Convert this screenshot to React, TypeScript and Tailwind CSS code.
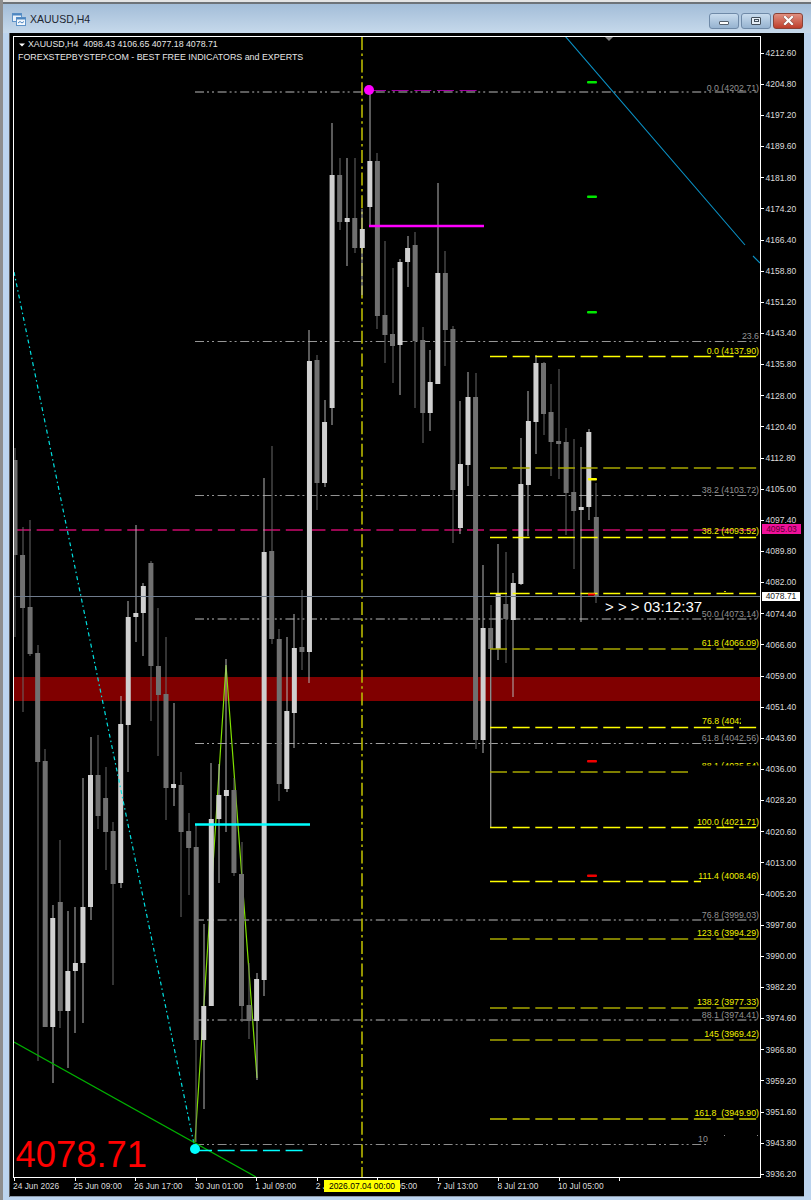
const xOf = (i: number) => 15 + 7.55 * i;

// wick top, body top, body bottom, wick bottom, bull
const candles: [number, number, number, number, boolean][] = [
  [448, 460, 555, 637, false],
  [527, 555, 608, 712, false],
  [520, 607, 654, 656, false],
  [645, 653, 762, 1061, false],
  [749, 761, 1027, 1027, false],
  [905, 918, 1027, 1083, true],
  [840, 902, 1011, 1028, false],
  [911, 971, 1011, 1068, true],
  [907, 963, 971, 1033, true],
  [778, 907, 963, 1023, true],
  [737, 775, 907, 920, true],
  [735, 775, 816, 829, false],
  [767, 798, 832, 870, false],
  [822, 831, 884, 985, false],
  [696, 724, 883, 888, true],
  [601, 617, 725, 772, true],
  [525, 613, 617, 642, true],
  [583, 586, 613, 656, true],
  [561, 563, 666, 721, false],
  [608, 666, 695, 756, false],
  [637, 694, 788, 820, false],
  [703, 784, 788, 806, true],
  [772, 785, 832, 917, false],
  [813, 831, 848, 895, false],
  [825, 847, 1040, 1142, false],
  [924, 1006, 1040, 1109, true],
  [763, 819, 1006, 1006, true],
  [764, 795, 819, 883, true],
  [659, 790, 796, 832, true],
  [778, 790, 873, 876, false],
  [842, 874, 1006, 1022, false],
  [963, 1005, 1021, 1039, false],
  [973, 979, 1021, 1080, true],
  [478, 552, 980, 996, true],
  [446, 551, 639, 644, false],
  [629, 639, 784, 801, false],
  [637, 711, 789, 792, true],
  [614, 648, 713, 748, true],
  [590, 647, 652, 670, false],
  [330, 361, 652, 683, true],
  [355, 360, 483, 510, false],
  [400, 422, 483, 487, true],
  [123, 175, 408, 425, true],
  [158, 175, 222, 230, false],
  [158, 218, 222, 266, true],
  [158, 218, 248, 253, false],
  [209, 229, 248, 295, true],
  [93, 161, 207, 227, true],
  [153, 161, 316, 329, false],
  [241, 315, 335, 363, false],
  [268, 334, 346, 383, false],
  [259, 262, 345, 395, true],
  [236, 248, 262, 287, true],
  [232, 245, 341, 408, false],
  [327, 340, 413, 443, false],
  [350, 382, 413, 431, true],
  [183, 273, 384, 384, true],
  [251, 273, 330, 366, false],
  [326, 329, 490, 543, false],
  [401, 464, 528, 534, true],
  [372, 397, 465, 486, true],
  [373, 397, 740, 749, false],
  [565, 628, 740, 753, true],
  [605, 628, 649, 827, false],
  [544, 594, 649, 660, true],
  [552, 604, 619, 663, false],
  [573, 583, 620, 697, true],
  [438, 484, 584, 585, true],
  [391, 421, 485, 536, true],
  [355, 363, 422, 454, true],
  [362, 363, 414, 435, false],
  [384, 412, 442, 476, false],
  [369, 441, 443, 479, false],
  [428, 442, 493, 535, false],
  [439, 492, 511, 569, false],
  [447, 507, 510, 622, true],
  [429, 432, 507, 520, true],
  [483, 517, 596, 603, false],
];

// half pixel y = thin and bright, whole pixel y = smeared over two rows as in the shot
const grayFib: [number, string, number][] = [
  [92, "#7c7c7c", 1.6],
  [341.5, "#969696", 1],
  [495.5, "#929292", 1],
  [619, "#7c7c7c", 1.6],
  [743.5, "#a0a0a0", 1],
  [920, "#7c7c7c", 1.6],
  [1020, "#7c7c7c", 1.6],
  [1144.5, "#8c8c8c", 1],
];

const yellowFib: [number, number, string, number][] = [
  [356.5, 757, "#ffff00", 1.4],
  [468, 757, "#a8a800", 1.6],
  [537.5, 757, "#ffff00", 1.4],
  [593.5, 757, "#ffff00", 1.4],
  [649, 757, "#a8a800", 1.6],
  [727.5, 757, "#ffff00", 1.4],
  [772, 688, "#a8a800", 1.6],
  [827.5, 757, "#ffff00", 1.4],
  [881.5, 701, "#ffff00", 1.4],
  [939, 757, "#a8a800", 1.6],
  [1008, 757, "#a8a800", 1.6],
  [1040, 757, "#a8a800", 1.6],
  [1119, 757, "#c4c400", 1.6],
];

const grayLabels: [string, number][] = [
  ["0.0 (4202.71)", 90.5],
  ["23.6", 339],
  ["38.2 (4103.72)", 493],
  ["50.0 (4073.14)", 616.5],
  ["61.8 (4042.56)", 741],
  ["76.8 (3999.03)", 917.5],
  ["88.1 (3974.41)", 1017.5],
];

const yellowLabels: [string, number][] = [
  ["0.0 (4137.90)", 354],
  ["38.2 (4093.52)", 534],
  ["61.8 (4066.09)", 646],
  ["100.0 (4021.71)", 825],
  ["111.4 (4008.46)", 879],
  ["123.6 (3994.29)", 936],
  ["138.2 (3977.33)", 1005],
  ["145 (3969.42)", 1037],
  ["161.8  (3949.90)", 1116],
];

const prices = [
  "4212.60", "4204.80", "4197.20", "4189.60", "4181.80", "4174.20", "4166.40", "4158.80", "4151.20",
  "4143.40", "4135.80", "4128.00", "4120.40", "4112.80", "4105.00", "4097.40", "4089.80", "4082.00",
  "4074.40", "4066.60", "4059.00", "4051.40", "4043.60", "4036.00", "4028.20", "4020.60", "4013.00",
  "4005.20", "3997.60", "3990.00", "3982.20", "3974.60", "3966.80", "3959.20", "3951.60", "3943.80", "3936.20",
];

const times = [
  "24 Jun 2026", "25 Jun 09:00", "26 Jun 17:00", "30 Jun 01:00", "1 Jul 09:00",
  "2 Jul 17:00", "6 Jul 05:00", "7 Jul 13:00", "8 Jul 21:00", "10 Jul 05:00", "",
];

const Plot = () => (
  <svg width="746" height="1140" viewBox="14 37 746 1140" className="block">
    <defs>
      <clipPath id="cut88">
        <rect x="690" y="755" width="70" height="10.5" />
      </clipPath>
      <clipPath id="cut76">
        <rect x="690" y="710" width="51" height="16" />
      </clipPath>
    </defs>

    <rect x="14" y="677" width="746" height="24" fill="#800000" />

    <path d="M195 1142L226 665L257 1078" fill="none" stroke="#80e000" strokeWidth="1.2" />

    {grayFib.map(([y, color, w]) => (
      <line key={y} x1="195" x2={y === 1144.5 ? 706 : 760} y1={y} y2={y} stroke={color} strokeWidth={w} strokeDasharray="9 3 2 3 2 3.6" />
    ))}

    <line x1="362" x2="362" y1="37" y2="1177" stroke="#b8b800" strokeWidth="1.6" strokeDasharray="13 3.5 2.5 3.6" />
    <line x1="14" x2="760" y1="530" y2="530" stroke="#cc0a6e" strokeWidth="1.6" strokeDasharray="17 5.65" />

    {candles.map(([wt, bt, bb, wb, bull], i) => (
      <g key={i}>
        <rect x={Math.round(xOf(i)) - 0.5} y={wt} width="1" height={wb - wt} fill={bull ? "#b4b4b4" : "#696969"} />
        <rect x={xOf(i) - 2.5} y={bt} width="5" height={Math.max(bb - bt, 3)} fill={bull ? "#d0d0d0" : "#707070"} />
      </g>
    ))}

    <line x1="490.5" x2="490.5" y1="640" y2="827" stroke="#8c8c8c" strokeWidth="1" />

    {yellowFib.map(([y, x2, color, w]) => (
      <line key={y} x1="490" x2={x2} y1={y} y2={y} stroke={color} strokeWidth={w} strokeDasharray="17 5.65" />
    ))}

    <line x1="14" x2="760" y1="596.5" y2="596.5" stroke="#6f7b8c" strokeWidth="1" />

    <path d="M14 272L195 1149" fill="none" stroke="#00e0e0" strokeWidth="1.2" strokeDasharray="4 3 1.5 3" />
    <path d="M565 36L745 245M753 256L760 263" fill="none" stroke="#0a90c4" strokeWidth="1.1" />
    <path d="M14 1042L256 1177" fill="none" stroke="#00b000" strokeWidth="1.2" />

    <line x1="195" x2="310" y1="824.5" y2="824.5" stroke="#00ffff" strokeWidth="2.4" />
    <line x1="195" x2="303" y1="1150.5" y2="1150.5" stroke="#00ffff" strokeWidth="1.3" strokeDasharray="17 5.65" />
    <circle cx="195" cy="1149" r="5" fill="#00ffff" />

    <line x1="369" x2="477" y1="90.5" y2="90.5" stroke="#a000a0" strokeWidth="1" strokeDasharray="17 5.65" />
    <line x1="369" x2="484" y1="226" y2="226" stroke="#ff00ff" strokeWidth="2.4" />
    <circle cx="369" cy="90" r="5" fill="#ff00ff" />

    <rect x="587" y="81" width="10" height="2.5" rx="1" fill="#00e800" />
    <rect x="587" y="195.5" width="10" height="2.5" rx="1" fill="#00e800" />
    <rect x="587" y="311" width="10" height="2.5" rx="1" fill="#00e800" />
    <rect x="588" y="478" width="9" height="2.5" rx="1" fill="#ffff00" />
    <rect x="588" y="593.5" width="7" height="2" fill="#f00000" />
    <rect x="587" y="760" width="10" height="2.5" rx="1" fill="#f00000" />
    <rect x="587" y="874.5" width="10" height="2.5" rx="1" fill="#f00000" />

    <rect x="724" y="1135" width="1" height="1" fill="#8c8c8c" />
    <rect x="757" y="1135" width="1" height="1" fill="#8c8c8c" />
    <rect x="724" y="591" width="2" height="1" fill="#c8c800" />

    <path d="M605 37H613L609 41Z" fill="#808080" />

    <g className="text-[8.8px] fill-[#929292]">
      {grayLabels.map(([label, y]) => (
        <text key={label} x="759" y={y} textAnchor="end">{label}</text>
      ))}
      <text x="698" y="1142">10</text>
    </g>
    <g className="text-[8.8px] fill-[#f0f000]">
      {yellowLabels.map(([label, y]) => (
        <text key={label} x="759" y={y} textAnchor="end" xmlSpace="preserve">{label}</text>
      ))}
      <text x="702" y="724" clipPath="url(#cut76)">76.8 (4042.00)</text>
      <text x="759" y="769" textAnchor="end" clipPath="url(#cut88)">88.1 (4035.54)</text>
    </g>

    <path d="M19 43.5H25L22 46.5Z" fill="#ffffff" />
    <text x="28" y="47" xmlSpace="preserve" className="text-[8.8px] fill-[#e6e6e6]">XAUUSD,H4  4098.43 4106.65 4077.18 4078.71</text>
    <text x="18" y="59.5" className="text-[8.9px] fill-[#e6e6e6]">FOREXSTEPBYSTEP.COM - BEST FREE INDICATORS and EXPERTS</text>

    <text x="605" y="612" xmlSpace="preserve" className="text-[15px] fill-white">{"> > > 03:12:37"}</text>
    <text x="15.5" y="1167" className="text-[36.4px] fill-[#ff0000]">4078.71</text>
  </svg>
);

const WinButton = ({ className, children }: { className: string; children: React.ReactNode }) => (
  <div className={`flex h-[16px] w-[30px] items-center justify-center rounded-[3px] border ${className}`}>{children}</div>
);

export default function App() {
  return (
    <div className="flex h-[1200px] w-[811px] flex-col overflow-hidden border-l-[3px] border-[#8e8e8e] bg-[#bcd4ee] [font-family:'Liberation_Sans',Arial,sans-serif]">
      {/* title bar */}
      <div className="h-[4px] shrink-0 border-b-2 border-[#6e7378] bg-[#e4e4e4]" />
      <div className="flex h-[29px] shrink-0 items-center bg-gradient-to-b from-[#a3bdd8] to-[#c6d9eb] pb-[1px] pl-[9px] pr-[8px]">
        <svg width="14" height="13" viewBox="0 0 14 13" className="mr-[4px] mt-[3px] shrink-0">
          <rect x="0.5" y="0.5" width="9" height="8" fill="#eaf2fb" stroke="#5f93c8" />
          <rect x="0.5" y="0.5" width="9" height="2" fill="#4d86c0" />
          <rect x="4.5" y="4.5" width="9" height="8" fill="#f3f8fd" stroke="#5f93c8" />
          <rect x="4.5" y="4.5" width="9" height="2" fill="#4d86c0" />
          <path d="M6 10L8 8.5L10 10L12 8.5" fill="none" stroke="#4d86c0" strokeWidth="1" />
        </svg>
        <span className="mt-[3px] text-[10.5px] text-[#1c2530]">XAUUSD,H4</span>
        <div className="ml-auto mt-[5px] flex gap-[2px]">
          <WinButton className="border-[#6f8aa8] bg-gradient-to-b from-[#c9dcee] to-[#96b3d0]">
            <div className="mt-[5px] h-[4px] w-[10px] rounded-[1px] border border-[#55606c] bg-white" />
          </WinButton>
          <WinButton className="border-[#6f8aa8] bg-gradient-to-b from-[#c9dcee] to-[#96b3d0]">
            <div className="flex h-[8px] w-[10px] items-center justify-center rounded-[1px] border border-[#44505c] bg-[#e6eef6]">
              <div className="h-[3px] w-[5px] border border-[#44505c]" />
            </div>
          </WinButton>
          <WinButton className="border-[#8a4236] bg-gradient-to-b from-[#e08f80] to-[#bd3c2a]">
            <svg width="11" height="9" viewBox="0 0 11 9">
              <path d="M2 1L9 8M9 1L2 8" stroke="#3a3a3a" strokeWidth="3.2" strokeLinecap="square" opacity="0.45" />
              <path d="M2 1L9 8M9 1L2 8" stroke="#ffffff" strokeWidth="2.2" strokeLinecap="square" />
            </svg>
          </WinButton>
        </div>
      </div>

      {/* chart window */}
      <div className="flex flex-1 pr-[7px]">
        <div className="h-[1164px] w-[7px] shrink-0 border-r border-[#5c5c5c]" />
        <div className="relative flex h-[1164px] w-[794px] flex-col border-b border-[#8a98a8] bg-black pl-[3px] pt-[3px]">
          <div className="flex h-[1142px] shrink-0 items-start">
            <div className="border border-white">
              <Plot />
            </div>
            {/* price axis */}
            <div className="flex flex-col pt-[1.7px] text-[8.5px] leading-none text-[#dcdcdc]">
              {prices.map((p) => (
                <div key={p} className="flex h-[31.15px] items-center">
                  <div className="h-px w-[3px] bg-white" />
                  <span className="ml-[1.5px]">{p}</span>
                </div>
              ))}
            </div>
          </div>

          {/* time axis */}
          <div className="flex pl-[1px] text-[8.4px] leading-none text-[#dcdcdc]">
            {times.map((t, i) => (
              <div key={i} className="w-[60.55px] shrink-0">
                <div className="h-[3px] w-px bg-white" />
                <span className="ml-[-1px] mt-[1px] block whitespace-nowrap">{t}</span>
              </div>
            ))}
          </div>

          {/* tags over the axes */}
          <div className="absolute left-[752px] top-[491px] flex h-[10px] w-[39px] items-center justify-center bg-[#f0109a] text-[8.5px] leading-none text-[#5a0030]">
            4095.03
          </div>
          <div className="absolute left-[752px] top-[559px] flex h-[9px] w-[38px] items-center justify-center bg-white text-[8.5px] leading-none text-[#222]">
            4078.71
          </div>
          <div className="absolute left-[314px] top-[1147px] flex h-[12px] w-[76px] items-center justify-center bg-[#ffff00] text-[8.5px] leading-none text-black">
            2026.07.04 00:00
          </div>
        </div>
      </div>
    </div>
  );
}
